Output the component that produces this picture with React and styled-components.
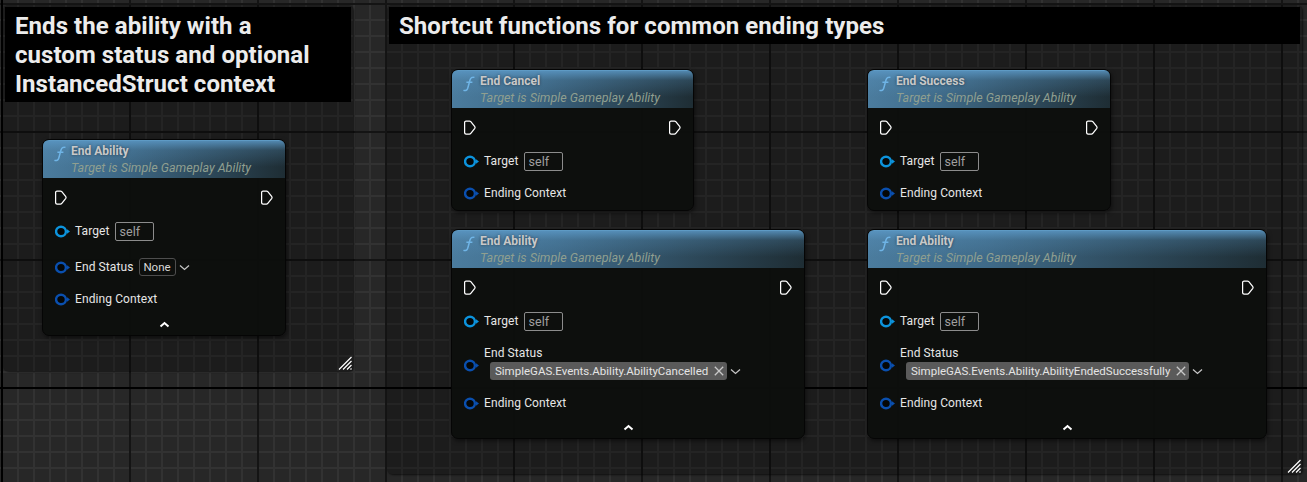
import React from "react"
import styled, { createGlobalStyle } from "styled-components"

const GlobalStyle = createGlobalStyle`
  html, body {
    margin: 0;
    padding: 0;
    background: #262626;
    overflow: hidden;
  }
`

const FunctionIcon = () => (
  <FuncSvg width="14" height="16" viewBox="0 0 14 16" fill="none" stroke="#6fb4e6" strokeWidth="1.5">
    <path d="M12.5 1.4C10 .6 8.6 1.8 8 4L5.8 12C5.2 14.3 3.6 15 1.4 14.4" />
    <path d="M4.4 6.2H10.4" />
  </FuncSvg>
)

const ExecPin = () => (
  <svg width="12" height="15" viewBox="0 0 12 15" fill="none" stroke="#fff" strokeWidth="1.25" strokeLinejoin="round">
    <path d="M2 1H5.4C6 1 6.4 1.2 6.8 1.7L10.8 6.7C11.1 7.2 11.1 7.8 10.8 8.3L6.8 13.3C6.4 13.8 6 14 5.4 14H2C1.1 14 .6 13.5 .6 12.6V2.4C.6 1.5 1.1 1 2 1Z" />
  </svg>
)

const DataPin = ({ color }) => (
  <PinSvg width="15" height="13" viewBox="0 0 15 13" fill="none">
    <ellipse cx="6" cy="6.5" rx="4.9" ry="4.8" stroke={color} strokeWidth="2.4" fill="#050707" />
    <path d="M12 4.2L15 6.5L12 8.8Z" fill={color} />
  </PinSvg>
)

const Chevron = ({ up }) => (
  <svg width="11" height="7" viewBox="0 0 11 7" fill="none" stroke={up ? "#fff" : "#c4c4c4"} strokeWidth={up ? 2 : 1.3}>
    <path d={up ? "M1.5 5.5L5.5 2L9.5 5.5" : "M1 1.5L5.5 5.5L10 1.5"} />
  </svg>
)

const CloseIcon = () => (
  <svg width="10" height="10" viewBox="0 0 10 10" fill="none" stroke="#c8c8c8" strokeWidth="1.3">
    <path d="M.8.8L9.2 9.2M9.2.8L.8 9.2" />
  </svg>
)

const Grip = () => (
  <GripSvg width="14" height="14" viewBox="0 0 14 14" fill="none" stroke="#fff" strokeWidth="1.2">
    <path d="M1 13.5L13.5 1M5 13.5L13.5 5M9 13.5L13.5 9M12.5 13.5L13.5 12.5" />
  </GripSvg>
)

const Target = () => (
  <Row $mt={13}>
    <DataPin color="#0c93dc" />
    <Label>Target</Label>
    <SelfBox>self</SelfBox>
  </Row>
)

const EndingContext = () => (
  <Row $mt={10}>
    <DataPin color="#0a4fae" />
    <Label>Ending Context</Label>
  </Row>
)

const TagStatus = ({ tag }) => (
  <StatusRow>
    <StatusPin>
      <DataPin color="#0a4fae" />
    </StatusPin>
    <StatusColumn>
      <StatusLabel>End Status</StatusLabel>
      <ChipRow>
        <Chip>
          {tag}
          <CloseIcon />
        </Chip>
        <Chevron />
      </ChipRow>
    </StatusColumn>
  </StatusRow>
)

const Node = ({ title, x, y, w, h, children, collapse }) => (
  <NodeBox $x={x} $y={y} $w={w} $h={h}>
    <NodeHeader>
      <FunctionIcon />
      <HeaderText>
        <NodeTitle>{title}</NodeTitle>
        <NodeSub>Target is Simple Gameplay Ability</NodeSub>
      </HeaderText>
    </NodeHeader>
    <NodeBody>
      <ExecRow>
        <ExecPin />
        <ExecPin />
      </ExecRow>
      <Target />
      {children}
      <EndingContext />
      {collapse && (
        <CollapseRow>
          <Chevron up />
        </CollapseRow>
      )}
    </NodeBody>
  </NodeBox>
)

const App = () => (
  <Canvas>
    <GlobalStyle />
    <Comment $x={3} $y={5} $w={350} $h={366}>
      <CommentTitle>
        Ends the ability with a
        <br />
        custom status and optional
        <br />
        InstancedStruct context
      </CommentTitle>
      <Grip />
    </Comment>
    <Comment $x={387} $y={5} $w={915} $h={469}>
      <CommentTitle>Shortcut functions for common ending types</CommentTitle>
      <Grip />
    </Comment>

    <Node title="End Ability" x={42} y={139} w={244} h={197} collapse>
      <Row $mt={14}>
        <DataPin color="#0a4fae" />
        <Label>End Status</Label>
        <NoneBox>None</NoneBox>
        <Chevron />
      </Row>
    </Node>
    <Node title="End Cancel" x={451} y={69} w={243} h={142} />
    <Node title="End Success" x={867} y={69} w={244} h={142} />
    <Node title="End Ability" x={451} y={229} w={354} h={210} collapse>
      <TagStatus tag="SimpleGAS.Events.Ability.AbilityCancelled" />
    </Node>
    <Node title="End Ability" x={867} y={229} w={400} h={210} collapse>
      <TagStatus tag="SimpleGAS.Events.Ability.AbilityEndedSuccessfully" />
    </Node>
  </Canvas>
)

export default App

const Canvas = styled.div`
  position: relative;
  width: 1307px;
  height: 482px;
  overflow: hidden;
  font-family: Roboto, "Liberation Sans", sans-serif;
  background-color: #272727;
  background-image:
    linear-gradient(#000, #000),
    linear-gradient(#000, #000),
    linear-gradient(90deg, #141414 2px, transparent 2px),
    linear-gradient(#141414 2px, transparent 2px),
    linear-gradient(90deg, #323232 2px, transparent 2px),
    linear-gradient(#323232 2px, transparent 2px);
  background-repeat: no-repeat, no-repeat, repeat, repeat, repeat, repeat;
  background-size: 2px 100%, 100% 2px, 128px 128px, 128px 128px, 16px 16px, 16px 16px;
  background-position: 1px 0, 0 387px, 1px 0, 0 3px, 1px 0, 0 3px;
`

const Comment = styled.div`
  position: absolute;
  left: ${(p) => p.$x}px;
  top: ${(p) => p.$y}px;
  width: ${(p) => p.$w}px;
  height: ${(p) => p.$h}px;
  box-sizing: border-box;
  padding: 2px;
  border-radius: 5px;
  background: rgba(0, 0, 0, 0.27);
  box-shadow: 1px 1px 2px rgba(0, 0, 0, 0.6);
`

const CommentTitle = styled.div`
  background: #000;
  color: #ececec;
  font-size: 24px;
  font-weight: 700;
  letter-spacing: 0.06px;
  line-height: 29px;
  padding: 5px 10px 3px;
`

const GripSvg = styled.svg`
  position: absolute;
  right: 1px;
  bottom: 1px;
`

const NodeBox = styled.div`
  position: absolute;
  left: ${(p) => p.$x}px;
  top: ${(p) => p.$y}px;
  width: ${(p) => p.$w}px;
  height: ${(p) => p.$h}px;
  box-sizing: border-box;
  border: 1px solid #050505;
  border-radius: 7px;
  overflow: hidden;
  background: rgba(12, 15, 13, 0.96);
  box-shadow: 1px 2px 4px rgba(0, 0, 0, 0.5);
  display: flex;
  flex-direction: column;
`

const NodeHeader = styled.div`
  height: 38px;
  flex: none;
  display: flex;
  align-items: flex-start;
  gap: 4px;
  box-sizing: border-box;
  padding: 3px 0 0 10px;
  background:
    linear-gradient(180deg, rgba(90, 150, 195, 0.85) 0, rgba(90, 150, 195, 0.25) 25%, rgba(90, 150, 195, 0) 70%),
    linear-gradient(90deg, #4b7c9e 0, #3f6a88 30%, #1e2d34 100%);
  border-top: 1px solid #5e9ac4;
`

const FuncSvg = styled.svg`
  flex: none;
  margin-top: 2px;
`

const PinSvg = styled.svg`
  flex: none;
`

const HeaderText = styled.div`
  display: flex;
  flex-direction: column;
`

const NodeTitle = styled.div`
  font-size: 12px;
  font-weight: 700;
  line-height: 15px;
  color: #c9c9c9;
  text-shadow: 0 0 3px rgba(0, 0, 0, 0.5);
`

const NodeSub = styled.div`
  font-size: 12.5px;
  font-style: italic;
  line-height: 17px;
  color: #8f9f90;
`

const NodeBody = styled.div`
  display: flex;
  flex-direction: column;
  padding: 9px 12px 0;
  flex: 1;
`

const ExecRow = styled.div`
  display: flex;
  justify-content: space-between;
  align-items: center;
  height: 20px;
`

const Row = styled.div`
  display: flex;
  align-items: center;
  height: 22px;
  margin-top: ${(p) => p.$mt}px;
`

const Label = styled.span`
  font-size: 12px;
  letter-spacing: 0.1px;
  color: #e6e6e6;
  margin-left: 5px;
`

const SelfBox = styled.div`
  width: 39px;
  height: 19px;
  box-sizing: border-box;
  margin-left: 5px;
  padding-left: 4px;
  border: 1px solid #8c8c8c;
  border-radius: 2px;
  font-size: 12.5px;
  line-height: 17px;
  color: #a0a0a0;
`

const NoneBox = styled.div`
  margin: 0 3px 0 5px;
  width: 37px;
  height: 18px;
  box-sizing: border-box;
  border: 1px solid #4e4e4e;
  border-radius: 3px;
  font-size: 11.5px;
  line-height: 16px;
  text-align: center;
  color: #d8d8d8;
`

const StatusRow = styled.div`
  display: flex;
  margin-top: 12px;
  height: 38px;
`

const StatusPin = styled.div`
  display: flex;
  align-items: center;
  height: 42px;
`

const StatusColumn = styled.div`
  display: flex;
  flex-direction: column;
  margin-left: 5px;
`

const StatusLabel = styled.div`
  font-size: 12px;
  letter-spacing: 0.1px;
  line-height: 18px;
  color: #e6e6e6;
`

const ChipRow = styled.div`
  display: flex;
  align-items: center;
  gap: 3px;
  margin-left: 6px;
`

const Chip = styled.div`
  display: flex;
  align-items: center;
  gap: 6px;
  height: 18px;
  padding: 0 3px 0 5px;
  border-radius: 3px;
  background: #5a5a5a;
  font-size: 11.5px;
  color: #e4e4e4;
  white-space: nowrap;
`

const CollapseRow = styled.div`
  display: flex;
  justify-content: center;
  align-items: center;
  flex: 1;
  margin-top: 3px;
  height: 16px;
`
